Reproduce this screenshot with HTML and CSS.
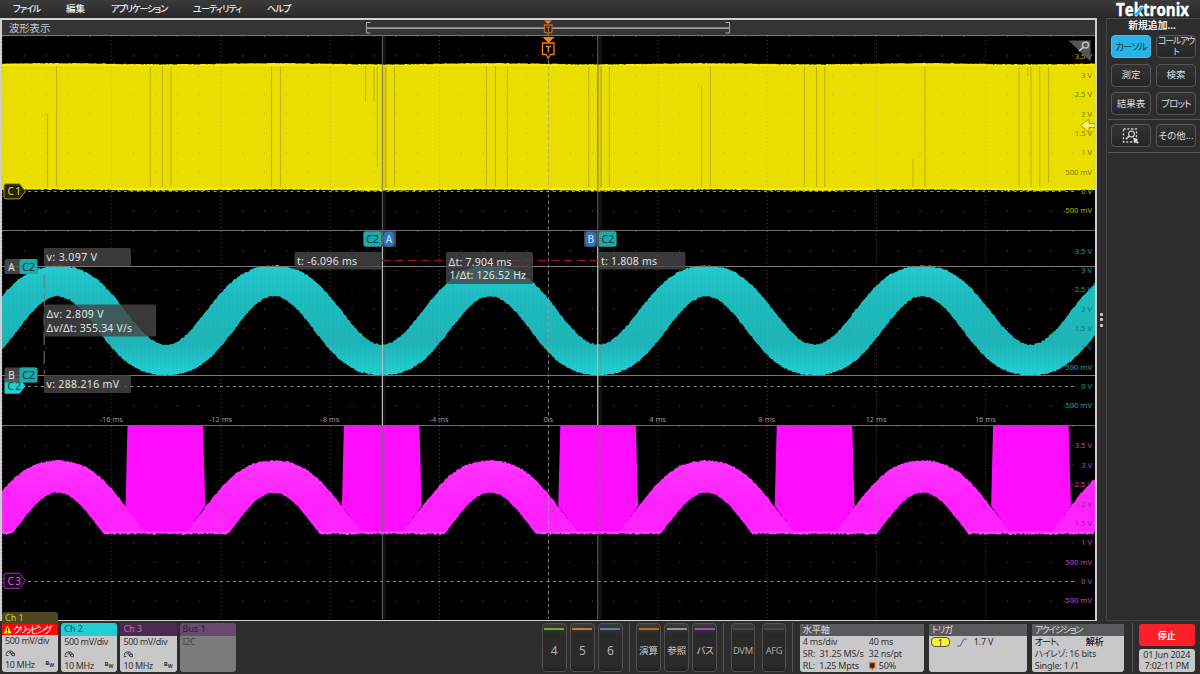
FILE: index.html
```html
<!DOCTYPE html>
<html lang="ja">
<head>
<meta charset="utf-8">
<title>Tektronix</title>
<link rel="stylesheet" href="styles.css">
</head>
<body>
<div class="app">
  <header class="menubar">
    <nav class="menu">
      <span class="m1">ファイル</span><span class="m2">編集</span><span class="m3">アプリケーション</span><span class="m4">ユーティリティ</span><span class="m5">ヘルプ</span>
    </nav>
    <svg class="logo" width="76" height="18" viewBox="0 0 76 18">
      <text x="1" y="15.5" textLength="73" lengthAdjust="spacingAndGlyphs" class="logo-text">Tektronix</text>
      <path d="M19 15.500h4L29.500 7h-4z" fill="#2cb4e4"/>
    </svg>
  </header>
  <main class="main">
    <section class="wave">
      <div class="wave-head">
        <span class="wave-title">波形表示</span>
        <svg class="zoombar" width="366" height="15" viewBox="365 20 366 15">
          <path d="M370.500 22.500H366.500V33H370.500M725.500 22.500h4V33h-4" fill="none" stroke="#aaa"/>
          <path d="M367 28.200H729" stroke="#999" stroke-width="1.700"/>
          <path d="M544 20.500h8l-4 3.500z" fill="#f58020"/>
          <path d="M544.500 25h7.500v7.500h-2.500l-1.300 1.800-1.300-1.800h-2.400z" fill="#222" stroke="#b4682c" stroke-width="1.300"/>
          <path d="M546.300 27h4M548.300 27v4.500" stroke="#c47434" stroke-width="1.200"/>
        </svg>
      </div>
      <svg class="plot" width="1093" height="584" viewBox="2 36 1093 584">
        <rect x="2" y="36" width="1093" height="584" fill="#000"/>
        <g id="waves"></g>
        <g id="grid"></g>
        <g id="scales"></g>
        <path d="M2 230.500H1095M2 425.500H1095" stroke="#6c6c6c" stroke-width="1.200"/>
        <path d="M548.400 60V619" stroke="#a0a0a0" stroke-dasharray="3.200 3.200" stroke-width="1" opacity=".8"/>
        <!-- cursors -->
        <path d="M2 266.500H1095M2 375.500H1095" stroke="#777" stroke-width="1.200"/>
        <path d="M384 36V619M600 36V619" stroke="#777" stroke-width="4" opacity=".14"/>
        <path d="M382.400 36V619M597.700 36V619" stroke="#6e6e6e" stroke-width="1.100" opacity=".8"/>
        <path d="M382.400 231V425M597.700 231V425" stroke="#b9c4c4" stroke-width="1.100"/>
        <path d="M382 260.500H598" stroke="#a51212" stroke-width="1.200" stroke-dasharray="8.500 4.500"/>
        <path d="M44.200 275V374" stroke="#777" stroke-width="1.300" stroke-dasharray="13 6" opacity=".8"/>

        <path d="M542.500 37h12l-6 6z" fill="#f58020"/>
        <path d="M542.500 43h11.500v11.500h-3.500l-2.200 3.500-2.200-3.500h-3.600z" fill="#000" stroke="#f58020" stroke-width="1.300"/>
        <path d="M545.600 46.500h5.400M548.300 46.500v6" stroke="#f58020" stroke-width="1.400"/>

        <path d="M1068.500 40.500h22v21z" fill="#555"/>
        <circle cx="1085.500" cy="45" r="3" fill="none" stroke="#bbb" stroke-width="1.500"/>
        <path d="M1083 47.500l-4 3.500" stroke="#bbb" stroke-width="1.800"/>
        <path d="M1080.500 125.500l8.500-6.500v4.500h6v4h-6v4.500z" fill="#fbf26a" stroke="#a89c10"/>

        <path d="M6 183.700h13.500l6 7.500-6 7.700H6a2 2 0 0 1-2-2v-11.200a2 2 0 0 1 2-2z" fill="#25230a" stroke="#a89e18"/>
        <text x="7.500" y="194.800" class="tag" fill="#e6da2a" textLength="13.500">C 1</text>
        <path d="M4.500 378h15l6 8-6 7.700h-15z" fill="#22cdd3"/>
        <text x="7.500" y="389.500" class="tag" fill="#043b3d" textLength="13.500">C 2</text>
        <path d="M6 573.200h13.500l6 7.500-6 7.700H6a2 2 0 0 1-2-2v-11.200a2 2 0 0 1 2-2z" fill="#1c081c" stroke="#963c9a"/>
        <text x="7.500" y="584.500" class="tag" fill="#d65ada" textLength="13.500">C 3</text>

        <g class="chip-box">
          <rect x="4.500" y="259" width="33" height="15" rx="1.500"/>
          <rect x="4.500" y="367.500" width="33" height="15" rx="1.500"/>
          <rect x="363.500" y="231" width="32.500" height="16" rx="2"/>
          <rect x="584" y="231" width="32.500" height="16" rx="2"/>
        </g>
        <g class="chip-c2">
          <rect x="19.500" y="259" width="18" height="15" rx="2"/>
          <rect x="19.500" y="367.500" width="18" height="15" rx="2"/>
          <rect x="363.500" y="231.500" width="18" height="15" rx="2"/>
          <rect x="599" y="231.500" width="17.500" height="15" rx="2"/>
        </g>
        <g fill="#2278c8"><rect x="383.500" y="231.500" width="10.800" height="15" rx="4.500"/><rect x="585.200" y="231.500" width="10.800" height="15" rx="4.500"/></g>
        <g class="chip-dark">
          <text x="28.500" y="270.500">C2</text><text x="28.500" y="379">C2</text><text x="372.500" y="243">C2</text><text x="607.800" y="243">C2</text>
        </g>
        <g class="chip-light">
          <text x="11.500" y="270.500">A</text><text x="11.500" y="379">B</text><text x="388.900" y="243">A</text><text x="590.700" y="243">B</text>
        </g>

        <g class="read-box">
          <rect x="44" y="248" width="87" height="18" rx="1.500"/>
          <rect x="44" y="304.500" width="112" height="32" rx="1.500"/>
          <rect x="44" y="375" width="87" height="18" rx="1.500"/>
          <rect x="294.500" y="252" width="87" height="17.500" rx="1.500"/>
          <rect x="446" y="252" width="87" height="32" rx="1.500"/>
          <rect x="598.500" y="252" width="87" height="17.500" rx="1.500"/>
        </g>
        <g class="read">
          <text x="46.500" y="261.300" textLength="50.500">v: 3.097 V</text>
          <text x="46.500" y="318" textLength="57">Δv: 2.809 V</text>
          <text x="46.500" y="332" textLength="85.500">Δv/Δt: 355.34 V/s</text>
          <text x="46.500" y="388" textLength="72.500">v: 288.216 mV</text>
          <text x="297" y="265" textLength="60">t: -6.096 ms</text>
          <text x="448.500" y="265.500" textLength="63">Δt: 7.904 ms</text>
          <text x="449.500" y="279.300" textLength="76.500">1/Δt: 126.52 Hz</text>
          <text x="601" y="265" textLength="56">t: 1.808 ms</text>
        </g>
      </svg>
    </section>
    <div class="handle"><i></i><i></i><i></i></div>
    <aside class="side">
      <h2>新規追加...</h2>
      <div class="btns">
        <button class="btn on"><span class="narrow">カーソル</span></button>
        <button class="btn two"><span>コールアウ<br>ト</span></button>
        <button class="btn">測定</button>
        <button class="btn">検索</button>
        <button class="btn">結果表</button>
        <button class="btn"><span class="narrow">プロット</span></button>
      </div>
      <div class="btns more">
        <button class="btn"><svg width="18" height="16" viewBox="0 0 18 16">
          <path d="M1.500 1h13v13h-13z" fill="none" stroke="#ccc" stroke-width="1.300" stroke-dasharray="2.200 1.600"/>
          <circle cx="9.500" cy="6" r="2.900" fill="none" stroke="#ccc" stroke-width="1.200"/>
          <path d="M7.300 8.200L4 11.200" stroke="#ccc" stroke-width="1.600"/>
          <path d="M11 9.500l5.500 2-2 .8 2.200 2.200-1.200 1.200-2.200-2.200-.8 2z" fill="#ddd"/></svg></button>
        <button class="btn"><span>その他...</span></button>
      </div>
    </aside>
  </main>
  <footer class="foot">
    <div class="badges">
      <div class="badge ch1">
        <div class="bh">Ch 1</div>
        <div class="clip"><svg width="9" height="9" viewBox="0 0 9 9"><path d="M4.500.5L8.700 8.500H.3z" fill="#ffe81c"/><path d="M4.500 3v3M4.500 6.800v1" stroke="#222" stroke-width="1.100"/></svg><span>クリッピング</span></div>
        <div class="bb"><div>500 mV/div</div><svg class="probe" width="11" height="9" viewBox="0 0 11 9"><path d="M1 6.500a4 4 0 0 1 7.800-1M.8 7.500h2.500M3.300 5.500l2-2 1.200 3.500M6.500 5.200l3 .2v2.300H7z" fill="none" stroke="#333" stroke-width=".9"/></svg><div class="bw">10 MHz<b>B<sub>W</sub></b></div></div>
      </div>
      <div class="badge ch2">
        <div class="bh">Ch 2</div>
        <div class="bb"><div>500 mV/div</div><svg class="probe" width="11" height="9" viewBox="0 0 11 9"><path d="M1 6.500a4 4 0 0 1 7.800-1M.8 7.500h2.500M3.300 5.500l2-2 1.200 3.500M6.500 5.200l3 .2v2.300H7z" fill="none" stroke="#333" stroke-width=".9"/></svg><div class="bw">10 MHz<b>B<sub>W</sub></b></div></div>
      </div>
      <div class="badge ch3">
        <div class="bh">Ch 3</div>
        <div class="bb"><div>500 mV/div</div><svg class="probe" width="11" height="9" viewBox="0 0 11 9"><path d="M1 6.500a4 4 0 0 1 7.800-1M.8 7.500h2.500M3.300 5.500l2-2 1.200 3.500M6.500 5.200l3 .2v2.300H7z" fill="none" stroke="#333" stroke-width=".9"/></svg><div class="bw">10 MHz<b>B<sub>W</sub></b></div></div>
      </div>
      <div class="badge bus"><div class="bh">Bus 1</div><div class="bb"><div>I2C</div></div></div>
    </div>
    <div class="keys">
      <div class="key num green">4</div><div class="key num orange">5</div><div class="key num blue">6</div>
    </div>
    <i class="sep"></i>
    <div class="keys"><div class="key amber">演算</div><div class="key silver">参照</div><div class="key violet"><span class="narrow">バス</span></div></div>
    <i class="sep"></i>
    <div class="keys wide"><div class="key lat">DVM</div><div class="key lat">AFG</div></div>
    <i class="sep"></i>
    <div class="card horiz">
      <h3>水平軸</h3>
      <div class="rows"><span>4 ms/div</span><span class="c2">40 ms</span><span>SR:&nbsp; 31.25 MS/s</span><span class="c2">32 ns/pt</span><span>RL:&nbsp; 1.25 Mpts</span><span class="c2 half"><svg width="7" height="9" viewBox="0 0 7 9"><path d="M.6.600h5.400v5.400H4.500L3.300 7.700 2.100 6H.6z" fill="#222" stroke="#e57a20" stroke-width="1.200"/></svg> 50%</span></div>
    </div>
    <div class="card trig">
      <h3><span class="narrow">トリガ</span></h3>
      <div class="trow"><span class="src">1</span><svg width="12" height="9" viewBox="0 0 12 9"><path d="M1 8h3L8 1h3" fill="none" stroke="#6c6c9c" stroke-width="1.200"/></svg><span>1.7 V</span></div>
    </div>
    <div class="card acq">
      <h3><span class="kana">アクイジション</span></h3>
      <div class="lines"><div class="auto"><span class="narrow">オート、</span><b>解析</b></div><div><span class="reso">ハイレゾ:</span> 16 bits</div><div>Single: 1 /1</div></div>
    </div>
    <i class="sep last"></i>
    <div class="end"><button class="stop">停止</button><div class="date">01 Jun 2024<br>7:02:11 PM</div></div>
  </footer>
</div>
<script src="scope.js"></script>
</body>
</html>
```

FILE: styles.css
```css
* { box-sizing: border-box; }
body {
  margin: 0;
  width: 1200px;
  height: 674px;
  overflow: hidden;
  background: #2d2d2d;
  color: #ddd;
  font: 10px/12px "Noto Sans", "Noto Sans CJK JP", sans-serif;
  font-feature-settings: "palt";
}
.app { display: grid; grid-template-rows: 18px 603px 53px; height: 674px; }
.menubar {
  display: flex;
  justify-content: space-between;
  background: linear-gradient(#3a3a3a, #292929);
}
.menu { display: flex; padding-left: 13px; font-size: 9px; line-height: 18px; color: #eee; white-space: nowrap; }
.menu span { letter-spacing: -.8px; font-weight: 500; }
.menu .m1 { width: 53px; letter-spacing: -1px; }
.menu .m2 { width: 45px; font-size: 9.500px; letter-spacing: 0; }
.menu .m3 { width: 82px; letter-spacing: -1px; }
.menu .m4 { width: 74px; }
.logo { margin-right: 9px; overflow: visible; }
.logo-text { font: bold 17px "Open Sans", "Noto Sans", sans-serif; fill: #fff; stroke: #fff; stroke-width: .4px; }

.main { display: grid; grid-template-columns: 1097px 9px 94px; min-height: 0; }
.wave { border: 2px solid #cfcfcf; border-width: 2px 2px 1.5px; overflow: hidden; }
.wave-head {
  display: flex;
  height: 16px;
  background: #343434;
  border-bottom: 1px solid #777;
}
.wave-title { width: 363px; padding-left: 7px; font-size: 10.300px; line-height: 16px; color: #c8c8c8; font-feature-settings: normal; }
.plot { display: block; font-family: "Noto Sans", sans-serif; }
.tag { font-size: 10px; }
.chip-box rect { fill: #505050; opacity: .85; }
.chip-c2 rect { fill: #20a9ad; }
.chip-dark text { fill: #063c3f; font-size: 11px; text-anchor: middle; }
.chip-light text { fill: #e4e4e4; font-size: 10px; text-anchor: middle; }
.read-box rect { fill: #464646; opacity: .82; }
.read text { fill: #e4e4e4; font-size: 10.500px; }
.scale { font-size: 7.600px; text-anchor: end; }
.time { font-size: 7.400px; text-anchor: middle; fill: #999; }

.handle { display: flex; flex-direction: column; align-items: center; justify-content: center; gap: 2.500px; }
.handle i { width: 2.500px; height: 3px; border-radius: 1px; background: #ccc; }
.side { border-left: 1px solid #444; border-top: 1px solid #4a4a4a; border-bottom: 1px solid #444; }
.side h2 { margin: 0; height: 16px; font-size: 9.800px; line-height: 13px; text-align: center; color: #eee; padding-right: 3px; }
.btns {
  display: grid;
  grid-template-columns: 40px 40px;
  column-gap: 5px;
  row-gap: 5.500px;
  margin-left: 1px;
  padding: 0 3px 4px;
  border-bottom: 1px solid #555;
}
.more { padding-top: 4px; padding-bottom: 5px; }
.btn {
  display: flex;
  align-items: center;
  justify-content: center;
  height: 23px;
  padding: 0;
  border: 1px solid #565350;
  border-radius: 4px;
  background: linear-gradient(#333, #262626);
  color: #ddd;
  font: 9.500px/10px "Noto Sans", "Noto Sans CJK JP", sans-serif;
  font-feature-settings: "palt";
  white-space: nowrap;
}
.btn.on { background: #28b4e8; border-color: #53b9dd; color: #0c3443; }
.two { letter-spacing: -1.300px; font-size: 9px; line-height: 10.500px; }
.narrow { letter-spacing: -.9px; }
.reso { letter-spacing: -.5px; }

.foot { display: flex; padding: 2px 0 2px 2px; }
.badges { display: flex; gap: 3px; align-items: flex-end; width: 540px; }
.badge { display: flex; flex-direction: column; width: 56.200px; height: 49px; border-radius: 3px; overflow: hidden; }
.bh { height: 12.500px; padding-left: 3px; font-size: 9px; line-height: 12.500px; flex: none; }
.bb { flex: 1; padding-left: 3px; background: #c8c8c8; color: #333; font-size: 9px; line-height: 12px; white-space: nowrap; letter-spacing: -.35px; }
.probe { display: block; margin: 1px 0 2px; }
.bw { display: flex; justify-content: space-between; padding-right: 4px; line-height: 12px; }
.bw b { font-size: 6px; line-height: 8px; letter-spacing: 0; }
.bw sub { font-size: 5px; line-height: 0; }
.ch1 { height: 60.500px; }
.ch1 .bh { background: #4c4920; color: #d8cc30; }
.clip { display: flex; height: 11px; background: #fb0808; color: #fff; font-size: 9px; line-height: 11px; padding: 1px 0 0 1px; letter-spacing: -1.600px; white-space: nowrap; flex: none; }
.clip svg { margin-right: 1px; flex: none; }
.clip span { line-height: 9px; }
.ch2 .bh { background: #20ced4; color: #063d40; }
.ch3 .bh { background: #4b2b4d; color: #d65ada; }
.bus .bh { background: #674b6d; color: #2b2030; }
.bus .bb { background: #7b7b7b; color: #484848; }

.keys { display: flex; gap: 3.500px; }
.keys.wide { gap: 6.500px; }
.key {
  width: 24.600px;
  height: 49px;
  display: flex;
  flex-direction: column;
  align-items: center;
  border: 1px solid #524e4a;
  border-radius: 4px;
  background: linear-gradient(#3c3c3c, #292929 22%, #2b2b2b 88%, #1e1e1e);
  font-size: 9.500px;
  line-height: 14px;
  color: #ccc;
  font-feature-settings: normal;
  white-space: nowrap;
}
.key::before { content: ""; width: 20px; height: 2px; margin: 4px 0 14px; background: #484848; flex: none; }
.num { font-size: 12px; color: #b4b4b4; }
.lat { font-size: 9.300px; color: #aaa; letter-spacing: -.3px; }
.green::before { background: #6fae28; }
.orange::before { background: #c8782c; }
.blue::before { background: #5c7eaa; }
.amber::before { background: #b8701c; }
.silver::before { background: #8e949c; }
.violet::before { background: #9a4cc0; }
.sep { width: 1px; margin: 0 6.500px 0 6px; background: #555; flex: none; }
.sep.last { margin-left: 7.500px; margin-right: 6px; }

.card { height: 48px; margin-top: 1px; border-radius: 3px; background: #c8c8c8; color: #333; overflow: hidden; font-size: 9px; line-height: 12px; letter-spacing: -.2px; white-space: nowrap; flex: none; }
.card h3 { margin: 0; height: 12px; padding-left: 3px; font-size: 9px; font-weight: 400; line-height: 12px; background: #58595b; color: #ddd; letter-spacing: 0; }
.horiz { width: 124px; }
.trig { width: 98.500px; margin-left: 5px; }
.acq { width: 92.500px; margin-left: 4.500px; }
.rows { display: grid; grid-template-columns: 66px 1fr; padding-left: 3px; }
.half { display: flex; align-items: center; gap: 3px; }
.trow { display: flex; align-items: center; padding-left: 2px; }
.trow svg { margin: 0 6px 0 6px; }
.src { width: 19px; height: 10px; border: 1px solid #555; border-radius: 4px; background: #fff02c; line-height: 9px; text-align: center; }
.lines { padding-left: 3px; }
.auto { display: flex; width: 69px; justify-content: space-between; color: #111; }
.auto b { font-weight: 500; letter-spacing: 0; }
.kana { letter-spacing: -1.200px; }
.end { padding-top: 1px; width: 56px; }
.stop { display: block; width: 56px; height: 22px; padding: 0; border: 0; border-radius: 3px; background: #fb2027; color: #fff; font: bold 9px "Noto Sans CJK JP", sans-serif; }
.date { margin-top: 3px; height: 23px; border-radius: 3px; background: #c8c8c8; color: #333; font-size: 9px; line-height: 11px; text-align: center; letter-spacing: -.2px; white-space: nowrap; }
```

FILE: scope.js
```js
(function () {
  var waves = document.getElementById('waves');
  var grid = document.getElementById('grid');
  var scales = document.getElementById('scales');
  var X0 = 2, X1 = 1095, PERIOD = 216.2, PEAK = 57.8;
  var seed = 7;

  function rnd() {
    seed = (seed * 16807) % 2147483647;
    return seed / 2147483647;
  }
  function upper(x) {
    var p = (x - PEAK) / PERIOD * 2 * Math.PI, s = Math.sin(p);
    return 320.5 - 39.5 * Math.cos(p) - 14.5 - 11 * s * s;
  }
  function lower(x) {
    var p = (x - PEAK) / PERIOD * 2 * Math.PI, s = Math.sin(p);
    return 320.5 - 39.5 * Math.cos(p) + 14.5 + 11.8 * s * s;
  }
  function band(top, bottom) {
    var a = [], b = [], x;
    for (x = X0; x <= X1; x += 1) {
      a.push(x + ' ' + top(x).toFixed(1));
      b.unshift(x + ' ' + bottom(x).toFixed(1));
    }
    return 'M' + a.join('L') + 'L' + b.join('L') + 'Z';
  }
  function path(d, attrs) {
    return '<path d="' + d + '" ' + attrs + '/>';
  }

  var out = '<defs>' +
    '<linearGradient id="cy" gradientUnits="userSpaceOnUse" x1="0" x2="0" y1="266" y2="375">' +
    '<stop offset="0" stop-color="#22cdd1"/><stop offset=".25" stop-color="#1fbdc1"/>' +
    '<stop offset=".7" stop-color="#1eb4b8"/><stop offset="1" stop-color="#22d0d4"/></linearGradient>' +
    '<linearGradient id="mg" gradientUnits="userSpaceOnUse" x1="0" x2="0" y1="461" y2="534">' +
    '<stop offset="0" stop-color="#ff35ff"/><stop offset=".6" stop-color="#ff20ff"/>' +
    '<stop offset=".95" stop-color="#ff24ff"/><stop offset="1" stop-color="#ff50ff"/></linearGradient></defs>';

  // channel 1
  function drift(x) { return -0.6 * Math.cos((x - PEAK) / PERIOD * 2 * Math.PI); }
  out += path(band(function (x) { return 64.2 + drift(x) - rnd() * 0.8; },
    function (x) { return 189.6 + drift(x) + rnd(); }), 'fill="#f8ee00"');
  out += '<rect x="2" y="66" width="1093" height="122" fill="#eade00"/>';
  [[47.5, 114], [56.5, 66], [150.3, 67], [162.4, 67], [171, 67], [271.5, 67], [280.5, 67],
    [365.5, 66, 101], [374, 67, 101], [377.4, 67, 167], [386, 67], [394.5, 67], [486.4, 66],
    [495.4, 66], [507.4, 66], [588.8, 67], [601, 67], [609.4, 67], [701.5, 86], [710.4, 66],
    [804.3, 67], [816.5, 67], [824.8, 67], [913, 158], [925, 67], [1019, 67], [1027.7, 67, 76],
    [1031, 67], [1039.7, 67], [1048.5, 67, 183]].forEach(function (l) {
    out += path('M' + l[0] + ' ' + l[1] + 'V' + (l[2] || 187), 'stroke="#b8ae00" stroke-width="1.1" opacity=".85"');
  });

  // channel 2
  out += path(band(function (x) { return upper(x) - rnd() * 1.8; },
    function (x) { return lower(x) + rnd() * 1.6; }), 'fill="url(#cy)"');

  // channel 3
  out += path(band(function (x) { return Math.min(531, upper(x) + 195 - rnd() * 1.8); },
    function (x) { return Math.min(533 + rnd() * 2, lower(x) + 196.5 + rnd() * 1.3); }), 'fill="url(#mg)"');
  for (var k = 0; k < 5; k++) {
    var o = k * 216.4;
    out += '<path d="M' + (127.5 + o) + ' 426H' + (203 + o) + 'L' + (205.3 + o) + ' 506L' + (187 + o) +
      ' 531H' + (144 + o) + 'L' + (125.5 + o) + ' 506Z" fill="#ff0dff"/>';
  }

  // vertical stripes left by the sampled carrier
  var v = '';
  for (var sx = 5; sx < X1; sx += 4) {
    v += 'M' + sx + ' ' + upper(sx).toFixed(1) + 'V' + lower(sx).toFixed(1);
  }
  out += path(v, 'stroke="#17989c" stroke-width="1" opacity=".1"');
  waves.innerHTML = out;

  // graticule
  var g = '', dash = '', n, s, r;
  for (n = 0; n < 10; n++) {
    g += 'M' + (2.5 + n * 109.25) + ' 36V619';
  }
  var gridHtml = path(g, 'stroke="#999" stroke-width="1" stroke-dasharray="1 2.9" opacity=".5"');
  var dots = '';
  for (s = 0; s < 3; s++) {
    for (r = 0; r < 10; r++) {
      var y = 36.5 + s * 195 + r * 19.4;
      if (r === 8) {
        dash += 'M28 ' + (y - 0.2) + 'H1075';
        continue;
      }
      for (n = 1; n < 50; n++) {
        if (n % 5) { dots += 'M' + (1.8 + n * 21.85).toFixed(1) + ' ' + y.toFixed(1) + 'h1.2'; }
      }
    }
  }
  gridHtml += path(dots, 'stroke="#999" stroke-width="1.1" opacity=".5"');
  gridHtml += path(dash, 'stroke="#8c8c8c" stroke-width="1" stroke-dasharray="3 3.4"');
  grid.innerHTML = gridHtml;

  // voltage and time labels; darker where a trace lies behind them
  var t = '';
  var labels = ['3.5 V', '3 V', '2.5 V', '2 V', '1.5 V', '1 V', '500 mV', '0 V', '-500 mV'];
  [['#b9b010', '#807a00', 1, 6], ['#1ba0a4', '#10777b', 3, 5], ['#bc4cc0', '#94209a', 3, 4]].forEach(function (c, i) {
    labels.forEach(function (l, j) {
      var fill = j >= c[2] && j <= c[3] ? c[1] : c[0];
      t += '<text class="scale" x="1092" y="' + (58.6 + i * 194.9 + j * 19.35).toFixed(1) + '" fill="' + fill + '">' + l + '</text>';
    });
  });
  ['-16 ms', '-12 ms', '-8 ms', '-4 ms', '0 s', '4 ms', '8 ms', '12 ms', '16 ms'].forEach(function (l, i) {
    t += '<text class="time" x="' + (111.3 + i * 109.25) + '" y="421.500">' + l + '</text>';
  });
  scales.innerHTML = t;
}());
```
